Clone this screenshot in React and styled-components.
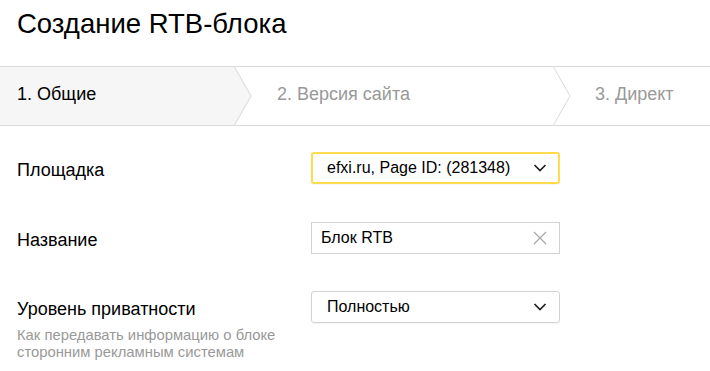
import React from "react";
import styled, { createGlobalStyle } from "styled-components";

const Global = createGlobalStyle`
  html, body { margin: 0; padding: 0; background: #fff; }
  body { font-family: "Liberation Sans", Arial, sans-serif; color: #000; }
`;

const Page = styled.div`
  width: 710px;
  height: 371px;
  overflow: hidden;
  background: #fff;
`;

const Title = styled.h1`
  margin: 0;
  padding: 6px 0 0 17px;
  font-size: 27.5px;
  line-height: 36px;
  font-weight: normal;
  color: #000;
`;

const Steps = styled.div`
  display: flex;
  margin-top: 24px;
  height: 58px;
  border-top: 1px solid #dadada;
  border-bottom: 1px solid #dadada;
`;

const Step = styled.div`
  position: relative;
  box-sizing: border-box;
  flex: ${(p) => (p.$w ? `0 0 ${p.$w}px` : "1 1 auto")};
  padding: 16px 0 0 ${(p) => p.$pad}px;
  font-size: 18px;
  line-height: 22px;
  color: ${(p) => (p.$active ? "#000" : "#999")};
`;

const StepFill = styled.div`
  position: absolute;
  inset: 0;
  background: #f6f6f6;
  clip-path: polygon(0 0, calc(100% - 17px) 0, 100% 50%, calc(100% - 17px) 100%, 0 100%);
`;

const StepLabel = styled.span`
  position: relative;
`;

const Chevron = styled.svg`
  position: absolute;
  top: 0;
  right: 0;
  width: 18px;
  height: 58px;
`;

const Form = styled.div`
  padding: 26px 0 0 17px;
  display: flex;
  flex-direction: column;
`;

const Row = styled.div`
  display: flex;
  align-items: flex-start;
  margin-bottom: ${(p) => p.$mb || 0}px;
`;

const LabelCol = styled.div`
  width: 294px;
  flex: 0 0 294px;
  padding-top: 7px;
`;

const Label = styled.div`
  font-size: 18px;
  line-height: 22px;
  color: #000;
`;

const Hint = styled.div`
  margin-top: 7px;
  font-size: 14.8px;
  line-height: 17px;
  color: #999;
`;

const Control = styled.div`
  box-sizing: border-box;
  width: 249px;
  height: 32px;
  display: flex;
  align-items: center;
  justify-content: space-between;
  padding: 0 ${(p) => p.$pr}px 0 ${(p) => p.$pl}px;
  border: ${(p) => (p.$focused ? "2px solid #ffdb4d" : "1px solid #d3d3d3")};
  border-radius: ${(p) => (p.$radius ? "3px" : "0")};
  background: #fff;
  font-size: 16px;
  color: #000;
  box-shadow: ${(p) => (p.$radius ? "0 1px 1px rgba(0,0,0,0.04)" : "none")};
`;

const Icon = styled.svg`
  flex: 0 0 auto;
  display: block;
`;

const ArrowDown = () => (
  <Icon width="14" height="8" viewBox="0 0 14 8">
    <polyline points="1.5,1 7,6.5 12.5,1" fill="none" stroke="#222" strokeWidth="1.7" />
  </Icon>
);

const Cross = () => (
  <Icon width="14" height="14" viewBox="0 0 14 14">
    <path d="M1 1 L13 13 M13 1 L1 13" stroke="#a6a6a6" strokeWidth="1.2" fill="none" />
  </Icon>
);

const ChevronLine = () => (
  <Chevron viewBox="0 0 18 58" preserveAspectRatio="none">
    <polyline points="0.5,0 17,29 0.5,58" fill="none" stroke="#dadada" strokeWidth="1" />
  </Chevron>
);

export default function App() {
  return (
    <Page>
      <Global />
      <Title>Создание RTB-блока</Title>
      <Steps>
        <Step $w={252} $pad={17} $active>
          <StepFill />
          <ChevronLine />
          <StepLabel>1. Общие</StepLabel>
        </Step>
        <Step $w={319} $pad={25}>
          <ChevronLine />
          <StepLabel>2. Версия сайта</StepLabel>
        </Step>
        <Step $pad={24}>
          <StepLabel>3. Директ</StepLabel>
        </Step>
      </Steps>
      <Form>
        <Row $mb={38}>
          <LabelCol>
            <Label>Площадка</Label>
          </LabelCol>
          <Control $focused $radius $pl={14} $pr={11}>
            <span>efxi.ru, Page ID: (281348)</span>
            <ArrowDown />
          </Control>
        </Row>
        <Row $mb={37}>
          <LabelCol>
            <Label>Название</Label>
          </LabelCol>
          <Control $pl={9} $pr={12}>
            <span>Блок RTB</span>
            <Cross />
          </Control>
        </Row>
        <Row>
          <LabelCol>
            <Label>Уровень приватности</Label>
            <Hint>
              Как передавать информацию о блоке
              <br />
              сторонним рекламным системам
            </Hint>
          </LabelCol>
          <Control $radius $pl={15} $pr={12}>
            <span>Полностью</span>
            <ArrowDown />
          </Control>
        </Row>
      </Form>
    </Page>
  );
}
